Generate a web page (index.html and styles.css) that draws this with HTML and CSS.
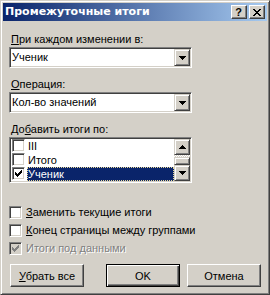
FILE: index.html
```
<!DOCTYPE html>
<html lang="ru">
<head>
<meta charset="utf-8">
<title>Промежуточные итоги</title>
<link rel="stylesheet" href="styles.css">
</head>
<body>
<div class="window">
  <div class="titlebar">
    <span class="title">Промежуточные итоги</span>
    <div class="tb-buttons">
      <span class="tb-btn help">?</span>
      <span class="tb-btn"><svg width="8" height="7" viewBox="0 0 8 7"><path fill="#000" d="M0 0h2v1H0z M6 0h2v1H6z M1 1h2v1H1z M5 1h2v1H5z M2 2h4v1H2z M3 3h2v1H3z M2 4h4v1H2z M1 5h2v1H1z M5 5h2v1H5z M0 6h2v1H0z M6 6h2v1H6z"/></svg></span>
    </div>
  </div>
  <div class="content">
    <div class="label"><u>П</u>ри каждом изменении в:</div>
    <div class="combo">
      <span class="combo-text">Ученик</span>
      <span class="drop"><svg width="7" height="4" viewBox="0 0 7 4"><path fill="#000" d="M0 0h7v1H0z M1 1h5v1H1z M2 2h3v1H2z M3 3h1v1H3z"/></svg></span>
    </div>
    <div class="label"><u>О</u>перация:</div>
    <div class="combo">
      <span class="combo-text">Кол-во значений</span>
      <span class="drop"><svg width="7" height="4" viewBox="0 0 7 4"><path fill="#000" d="M0 0h7v1H0z M1 1h5v1H1z M2 2h3v1H2z M3 3h1v1H3z"/></svg></span>
    </div>
    <div class="label">До<u>б</u>авить итоги по:</div>
    <div class="listbox">
      <div class="items">
        <div class="item"><span class="cb"></span><span class="txt">III</span></div>
        <div class="item"><span class="cb"></span><span class="txt">Итого</span></div>
        <div class="item sel"><span class="cb"><svg width="7" height="7" viewBox="0 0 7 7"><path fill="#000" d="M0 2h1v3H0z M1 3h1v3H1z M2 4h1v3H2z M3 3h1v3H3z M4 2h1v3H4z M5 1h1v3H5z M6 0h1v3H6z"/></svg></span><span class="txt">Ученик</span></div>
      </div>
      <div class="scrollbar">
        <span class="sb-btn"><svg width="7" height="4" viewBox="0 0 7 4"><path fill="#000" d="M3 0h1v1H3z M2 1h3v1H2z M1 2h5v1H1z M0 3h7v1H0z"/></svg></span>
        <span class="track"><span class="thumb"></span></span>
        <span class="sb-btn"><svg width="7" height="4" viewBox="0 0 7 4"><path fill="#000" d="M0 0h7v1H0z M1 1h5v1H1z M2 2h3v1H2z M3 3h1v1H3z"/></svg></span>
      </div>
    </div>
    <div class="checks">
      <div class="check"><span class="cb"></span><span><u>З</u>аменить текущие итоги</span></div>
      <div class="check"><span class="cb"></span><span><u>К</u>онец страницы между группами</span></div>
      <div class="check disabled"><span class="cb"><svg width="7" height="7" viewBox="0 0 7 7"><path fill="#808080" d="M0 2h1v3H0z M1 3h1v3H1z M2 4h1v3H2z M3 3h1v3H3z M4 2h1v3H4z M5 1h1v3H5z M6 0h1v3H6z"/></svg></span><span>Итоги под данными</span></div>
    </div>
    <div class="buttons">
      <div class="btn b-remove"><span><u>У</u>брать все</span></div>
      <div class="btn b-ok default">OK</div>
      <div class="btn b-cancel">Отмена</div>
    </div>
  </div>
</div>
</body>
</html>
```
FILE: styles.css
```
* { box-sizing: border-box; }
html, body { margin: 0; padding: 0; }
body {
  width: 270px;
  height: 295px;
  background: #d4d0c8;
  font-family: "Liberation Sans", Arial, sans-serif;
  font-size: 11px;
  color: #000;
}
.window {
  width: 270px;
  height: 295px;
  background: #d4d0c8;
  border: 1px solid;
  border-color: #d4d0c8 #404040 #404040 #d4d0c8;
  box-shadow: inset 1px 1px #fff, inset -1px -1px #808080;
  padding: 2px;
  display: flex;
  flex-direction: column;
}
.titlebar {
  height: 18px;
  flex-shrink: 0;
  background: linear-gradient(to right, #0a246a, #a6caf0);
  display: flex;
  align-items: center;
  justify-content: space-between;
  padding: 0 2px 0 2px;
}
.title {
  color: #fff;
  font-family: "DejaVu Sans", Verdana, sans-serif;
  font-weight: bold;
  font-size: 11px;
  line-height: 14px;
}
.tb-buttons { display: flex; gap: 2px; }
.tb-btn {
  width: 16px;
  height: 14px;
  background: #d4d0c8;
  border: 1px solid;
  border-color: #fff #404040 #404040 #fff;
  box-shadow: inset -1px -1px #808080;
  display: flex;
  align-items: center;
  justify-content: center;
}
.help { font-weight: bold; font-size: 11px; line-height: 12px; padding-right: 1px; }
.content {
  display: flex;
  flex-direction: column;
  padding: 12px 0 0 6px;
}
.label {
  line-height: 13px;
  padding-left: 2px;
  margin-bottom: 1px;
}
.combo {
  width: 183px;
  height: 21px;
  background: #fff;
  border: 1px solid;
  border-color: #808080 #fff #fff #808080;
  box-shadow: inset 1px 1px #404040, inset -1px -1px #d4d0c8;
  padding: 1px;
  display: flex;
  margin-bottom: 10px;
}
.combo-text {
  flex: 1;
  line-height: 17px;
  padding-left: 1px;
}
.drop, .sb-btn {
  width: 16px;
  height: 17px;
  background: #d4d0c8;
  border: 1px solid;
  border-color: #d4d0c8 #404040 #404040 #d4d0c8;
  box-shadow: inset 1px 1px #fff, inset -1px -1px #808080;
  display: flex;
  align-items: center;
  justify-content: center;
  flex-shrink: 0;
}
.listbox {
  width: 183px;
  height: 46px;
  background: #fff;
  border: 1px solid;
  border-color: #808080 #fff #fff #808080;
  box-shadow: inset 1px 1px #404040, inset -1px -1px #d4d0c8;
  padding: 1px;
  display: flex;
}
.items { flex: 1; padding-left: 1px; }
.item {
  height: 14px;
  display: flex;
  align-items: flex-start;
}
.cb {
  width: 13px;
  height: 13px;
  flex-shrink: 0;
  background: #fff;
  border: 1px solid;
  border-color: #808080 #fff #fff #808080;
  box-shadow: inset 1px 1px #404040, inset -1px -1px #d4d0c8;
  display: flex;
  align-items: center;
  justify-content: center;
}
.item .cb { margin-right: 2px; }
.txt {
  flex: 1;
  height: 14px;
  line-height: 14px;
  padding-left: 1px;
}
.sel .txt {
  background: #0a246a;
  color: #fff;
  outline: 1px dotted #e8d898;
  outline-offset: -1px;
}
.scrollbar {
  width: 16px;
  display: flex;
  flex-direction: column;
}
.sb-btn { height: 16px; }
.track {
  flex: 1;
  display: flex;
  flex-direction: column;
  justify-content: flex-end;
  background: repeating-conic-gradient(#fff 0 25%, #d4d0c8 0 50%) 0 0 / 2px 2px;
}
.thumb {
  height: 8px;
  background: #d4d0c8;
  border: 1px solid;
  border-color: #d4d0c8 #404040 #404040 #d4d0c8;
  box-shadow: inset 1px 1px #fff, inset -1px -1px #808080;
}
.checks {
  margin-top: 23px;
  display: flex;
  flex-direction: column;
  gap: 5px;
}
.check {
  height: 13px;
  display: flex;
  align-items: center;
  gap: 4px;
  line-height: 13px;
}
.disabled { color: #808080; text-shadow: 1px 1px #fff; }
.disabled .cb { background: #d4d0c8; }
.buttons {
  margin-top: 9px;
  display: flex;
  padding-left: 1px;
}
.btn {
  width: 74px;
  height: 23px;
  background: #d4d0c8;
  border: 1px solid;
  border-color: #fff #404040 #404040 #fff;
  box-shadow: inset -1px -1px #808080;
  display: flex;
  align-items: center;
  justify-content: center;
}
.b-ok { margin-left: 22px; }
.b-cancel { margin-left: 7px; }
.default {
  border-color: #000;
  box-shadow: inset 1px 1px #fff, inset -1px -1px #404040, inset -2px -2px #808080;
}
```
